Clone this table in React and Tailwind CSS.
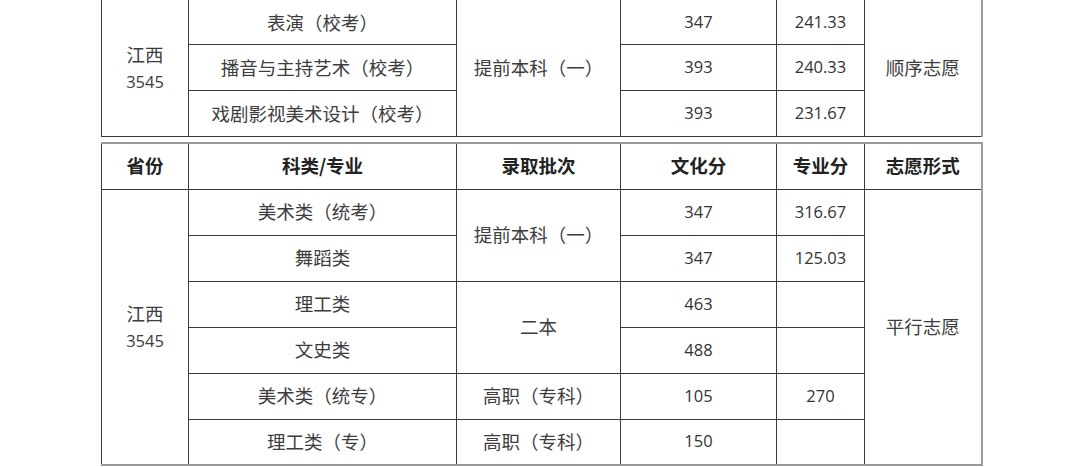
import React from "react";

const cjk = { fontFamily: '"Noto Sans CJK SC", "Noto Sans", sans-serif' };
const num = { fontFamily: '"Open Sans", "Noto Sans CJK SC", sans-serif' };

function Cols() {
  return (
    <colgroup>
      <col className="w-[87px]" />
      <col className="w-[268px]" />
      <col className="w-[164px]" />
      <col className="w-[156px]" />
      <col className="w-[88px]" />
      <col className="w-[117px]" />
    </colgroup>
  );
}

const td = "border border-[#3a3a3a] h-[46px] p-0 text-center align-middle text-[18.5px] text-[#3d3d3d]";
const tdn = "border border-[#3a3a3a] h-[46px] p-0 text-center align-middle text-[16.5px] text-[#333]";
const hd = td + " border-t-2 border-t-[#9a9a9a] font-bold text-[#222]";

function Prov() {
  return (
    <div className="leading-[27px]">
      <div>江西</div>
      <div style={num} className="text-[16.5px]">3545</div>
    </div>
  );
}

export default function App() {
  return (
    <div className="w-[1080px] h-[467px] bg-white overflow-hidden" style={cjk}>
      <table className="ml-[101px] mt-[-2px] w-[880px] table-fixed border-collapse">
        <Cols />
        <tbody>
          <tr>
            <td rowSpan={3} className={td}><Prov /></td>
            <td className={td + " pt-[2px]"}>表演（校考）</td>
            <td rowSpan={3} className={td}>提前本科（一）</td>
            <td className={tdn + " pt-[2px]"} style={num}>347</td>
            <td className={tdn + " pt-[2px]"} style={num}>241.33</td>
            <td rowSpan={3} className={td + " border-r-2 border-r-[#9a9a9a]"}>顺序志愿</td>
          </tr>
          <tr>
            <td className={td}>播音与主持艺术（校考）</td>
            <td className={tdn} style={num}>393</td>
            <td className={tdn} style={num}>240.33</td>
          </tr>
          <tr>
            <td className={td}>戏剧影视美术设计（校考）</td>
            <td className={tdn} style={num}>393</td>
            <td className={tdn} style={num}>231.67</td>
          </tr>
        </tbody>
      </table>

      <table className="ml-[101px] mt-[5px] w-[880px] table-fixed border-collapse">
        <Cols />
        <tbody>
          <tr>
            <td className={hd}>省份</td>
            <td className={hd}>科类/专业</td>
            <td className={hd}>录取批次</td>
            <td className={hd}>文化分</td>
            <td className={hd}>专业分</td>
            <td className={hd + " border-r-2 border-r-[#9a9a9a]"}>志愿形式</td>
          </tr>
          <tr>
            <td rowSpan={6} className={td + " border-b-2 border-b-[#9a9a9a]"}><Prov /></td>
            <td className={td}>美术类（统考）</td>
            <td rowSpan={2} className={td}>提前本科（一）</td>
            <td className={tdn} style={num}>347</td>
            <td className={tdn} style={num}>316.67</td>
            <td rowSpan={6} className={td + " border-r-2 border-r-[#9a9a9a] border-b-2 border-b-[#9a9a9a]"}>平行志愿</td>
          </tr>
          <tr>
            <td className={td}>舞蹈类</td>
            <td className={tdn} style={num}>347</td>
            <td className={tdn} style={num}>125.03</td>
          </tr>
          <tr>
            <td className={td}>理工类</td>
            <td rowSpan={2} className={td}>二本</td>
            <td className={tdn} style={num}>463</td>
            <td className={tdn} style={num}></td>
          </tr>
          <tr>
            <td className={td}>文史类</td>
            <td className={tdn} style={num}>488</td>
            <td className={tdn} style={num}></td>
          </tr>
          <tr>
            <td className={td}>美术类（统专）</td>
            <td className={td}>高职（专科）</td>
            <td className={tdn} style={num}>105</td>
            <td className={tdn} style={num}>270</td>
          </tr>
          <tr>
            <td className={td + " border-b-2 border-b-[#9a9a9a]"}>理工类（专）</td>
            <td className={td + " border-b-2 border-b-[#9a9a9a]"}>高职（专科）</td>
            <td className={tdn + " border-b-2 border-b-[#9a9a9a]"} style={num}>150</td>
            <td className={tdn + " border-b-2 border-b-[#9a9a9a]"} style={num}></td>
          </tr>
        </tbody>
      </table>
    </div>
  );
}
